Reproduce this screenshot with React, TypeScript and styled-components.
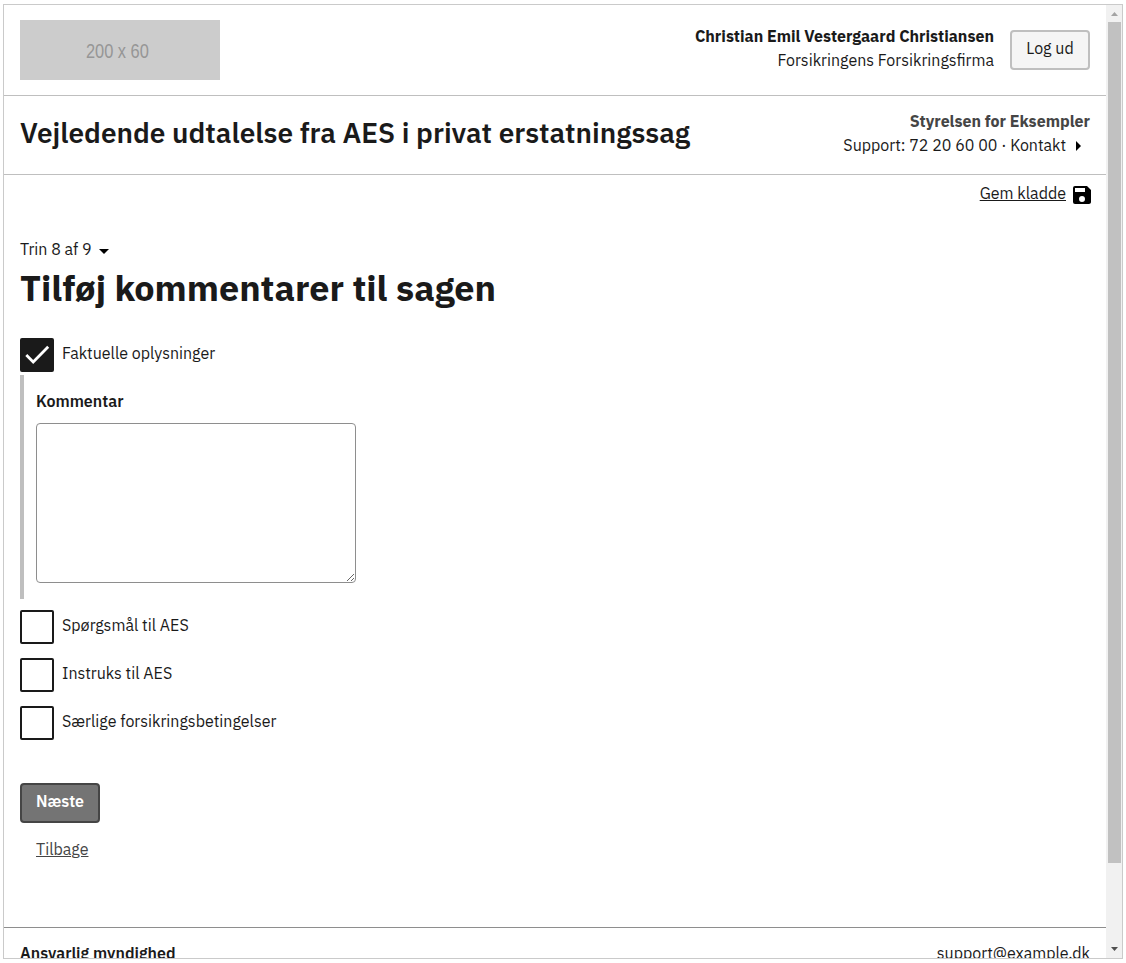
import React, { useState } from 'react';
import styled, { createGlobalStyle } from 'styled-components';

const GlobalStyle = createGlobalStyle`
  * { box-sizing: border-box; }
  body { margin: 0; background: #fff; }
  body, button, textarea {
    font-family: "IBM Plex Sans", Roboto, "Noto Sans", sans-serif;
    font-size: 16px;
    line-height: 24px;
    color: #1a1a1a;
  }
`;

const Frame = styled.div`
  display: flex;
  width: 1120px;
  height: 955px;
  margin: 4px 0 0 3px;
  border: 1px solid #cacaca;
  overflow: hidden;
`;

const Page = styled.div`
  flex: 1;
  min-width: 0;
  overflow: hidden;
`;

const Header = styled.header`
  display: flex;
  justify-content: space-between;
  height: 91px;
  padding: 15px 16px 0;
  border-bottom: 1px solid #bfbfbf;
`;

const Logo = styled.div`
  display: flex;
  align-items: center;
  justify-content: center;
  width: 200px;
  height: 60px;
  padding: 2px 5px 0 0;
  background: #ccc;
  color: #969696;
  font: 20px "Liberation Sans Narrow", "Liberation Sans", sans-serif;
`;

const LogoText = styled.span`
  white-space: nowrap;
  transform: scaleX(0.82);
`;

const Account = styled.div`
  display: flex;
  gap: 16px;
  padding-top: 4px;
`;

const RightText = styled.div`
  text-align: right;
`;

const Strong = styled.div<{ $color?: string }>`
  font-weight: 700;
  color: ${(p) => p.$color ?? '#1a1a1a'};
`;

const Button = styled.button<{ $primary?: boolean }>`
  display: block;
  width: 80px;
  height: 40px;
  padding: 0 0 4px;
  border: 2px solid ${(p) => (p.$primary ? '#454545' : '#bfbfbf')};
  border-radius: 4px;
  background: ${(p) => (p.$primary ? '#747474' : '#f5f5f5')};
  color: ${(p) => (p.$primary ? '#fff' : '#1a1a1a')};
  font-weight: ${(p) => (p.$primary ? 600 : 400)};
`;

const LogoutButton = styled(Button)`
  margin-top: 6px;
`;

const TitleBar = styled.div`
  display: flex;
  justify-content: space-between;
  height: 79px;
  padding: 13px 16px 0;
  border-bottom: 1px solid #bfbfbf;
`;

const SolutionTitle = styled.h2`
  margin: 6px 0 0;
  font-size: 28px;
  line-height: 36px;
  font-weight: 600;
`;

const Contact = styled.div`
  display: flex;
  justify-content: flex-end;
`;

const Arrow = styled.svg<{ $drop: number }>`
  display: block;
  width: 24px;
  height: 24px;
  margin: ${(p) => `${p.$drop}px 0 ${-p.$drop}px`};
`;

const Main = styled.main`
  height: 752px;
  padding: 6px 16px 0;
`;

const SaveRow = styled.div`
  display: flex;
  justify-content: flex-end;
  gap: 4px;
  height: 24px;
  margin-right: -4px;
`;

const Link = styled.a<{ $muted?: boolean }>`
  color: ${(p) => (p.$muted ? '#454545' : '#1a1a1a')};
  text-decoration: underline;
  text-underline-offset: 1px;
  text-decoration-thickness: 1px;
`;

const SaveIcon = styled.svg`
  display: block;
  width: 24px;
  height: 24px;
  margin-top: 2px;
`;

const Step = styled.div`
  display: flex;
  margin-top: 32px;
`;

const Heading = styled.h1`
  margin: 4px 0 0;
  font-size: 36px;
  line-height: 46px;
  font-weight: 700;
`;

const CheckRow = styled.label<{ $top?: number }>`
  display: flex;
  gap: 8px;
  height: 34px;
  margin-top: ${(p) => p.$top ?? 14}px;
`;

const CheckInput = styled.input`
  appearance: none;
  position: absolute;
  margin: 0;
  opacity: 0;
`;

const CheckBox = styled.span<{ $on: boolean }>`
  width: 34px;
  height: 34px;
  border: 2px solid #1a1a1a;
  border-radius: 2px;
  background: ${(p) => (p.$on ? '#1a1a1a' : '#fff')};
`;

const CheckMark = styled.svg`
  display: block;
  width: 30px;
  height: 30px;
`;

const CheckText = styled.span`
  padding-top: 3px;
`;

const Collapse = styled.div`
  height: 224px;
  margin-top: 3px;
  padding: 14px 0 0 12px;
  border-left: 4px solid #bfbfbf;
`;

const FieldLabel = styled.label`
  display: block;
  font-weight: 600;
`;

const TextArea = styled.textarea`
  display: block;
  width: 320px;
  height: 160px;
  margin-top: 10px;
  border: 1px solid #8e8e8e;
  border-radius: 4px;
  background: #fff;
  resize: both;
`;

const Actions = styled.div`
  margin-top: 43px;
`;

const BackRow = styled.div`
  margin-top: 14px;
  padding-left: 16px;
`;

const Footer = styled.footer`
  display: flex;
  justify-content: space-between;
  padding: 13px 16px 0;
  border-top: 1px solid #8e8e8e;
`;

const FooterTitle = styled.div`
  font-weight: 600;
`;

const Scrollbar = styled.div`
  display: flex;
  flex-direction: column;
  justify-content: space-between;
  width: 16px;
  background: #f1f1f1;
`;

const ScrollArrow = styled.svg`
  display: block;
  width: 16px;
  height: 17px;
`;

const Thumb = styled.div`
  width: 13px;
  height: 841px;
  margin: 0 0 auto 2px;
  background: #c1c1c1;
`;

function Check({ label, on = false, top }: { label: string; on?: boolean; top?: number }) {
  const [checked, setChecked] = useState(on);
  return (
    <CheckRow $top={top}>
      <CheckInput type="checkbox" checked={checked} onChange={() => setChecked(!checked)} />
      <CheckBox $on={checked}>
        {checked && (
          <CheckMark viewBox="0 0 30 30">
            <path d="M4.300 15 11.200 21.900 26.200 6.800" fill="none" stroke="#fff" strokeWidth="2.8" />
          </CheckMark>
        )}
      </CheckBox>
      <CheckText>{label}</CheckText>
    </CheckRow>
  );
}

export default function App() {
  return (
    <>
      <GlobalStyle />
      <Frame>
        <Page>
          <Header>
            <Logo><LogoText>200 x 60</LogoText></Logo>
            <Account>
              <RightText>
                <Strong>Christian Emil Vestergaard Christiansen</Strong>
                <div>Forsikringens Forsikringsfirma</div>
              </RightText>
              <LogoutButton>Log ud</LogoutButton>
            </Account>
          </Header>
          <TitleBar>
            <SolutionTitle>Vejledende udtalelse fra AES i privat erstatningssag</SolutionTitle>
            <RightText>
              <Strong $color="#454545">Styrelsen for Eksempler</Strong>
              <Contact>
                <span>Support: 72 20 60 00 · Kontakt</span>
                <Arrow $drop={1} viewBox="0 0 24 24"><path d="M10 17l5-5-5-5z" /></Arrow>
              </Contact>
            </RightText>
          </TitleBar>
          <Main>
            <SaveRow>
              <Link>Gem kladde</Link>
              <SaveIcon viewBox="0 0 24 24">
                <path d="M17 3H5a2 2 0 0 0-2 2v14a2 2 0 0 0 2 2h14c1.100 0 2-.9 2-2V7l-4-4zm-5 16a3 3 0 1 1 0-6 3 3 0 0 1 0 6zm3-10H5V5h10v4z" />
              </SaveIcon>
            </SaveRow>
            <Step>
              <span>Trin 8 af 9</span>
              <Arrow $drop={2} viewBox="0 0 24 24"><path d="M7 10l5 5 5-5z" /></Arrow>
            </Step>
            <Heading>Tilføj kommentarer til sagen</Heading>
            <Check label="Faktuelle oplysninger" on top={27} />
            <Collapse>
              <FieldLabel htmlFor="comment">Kommentar</FieldLabel>
              <TextArea id="comment" />
            </Collapse>
            <Check label="Spørgsmål til AES" top={11} />
            <Check label="Instruks til AES" />
            <Check label="Særlige forsikringsbetingelser" />
            <Actions>
              <Button $primary>Næste</Button>
              <BackRow><Link $muted>Tilbage</Link></BackRow>
            </Actions>
          </Main>
          <Footer>
            <FooterTitle>Ansvarlig myndighed</FooterTitle>
            <span>support@example.dk</span>
          </Footer>
        </Page>
        <Scrollbar>
          <ScrollArrow viewBox="0 0 16 17"><path d="M5 11h7L8.500 7z" fill="#a3a3a3" /></ScrollArrow>
          <Thumb />
          <ScrollArrow viewBox="0 0 16 17"><path d="M5 6h7L8.500 10z" fill="#505050" /></ScrollArrow>
        </Scrollbar>
      </Frame>
    </>
  );
}
